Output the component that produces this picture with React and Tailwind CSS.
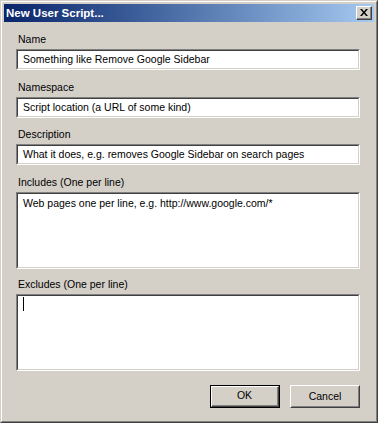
import React from "react";

function Sunken({ className = "", children }) {
  return (
    <div className={`border border-t-[#808080] border-l-[#808080] border-r-white border-b-white ${className}`}>
      <div className="h-full border border-t-[#404040] border-l-[#404040] border-r-[#d4d0c8] border-b-[#d4d0c8] bg-white">
        {children}
      </div>
    </div>
  );
}

function Field({ label, value, className }) {
  return (
    <div className={className}>
      <div className="pl-[14px] leading-[13px]">{label}</div>
      <Sunken className="mt-[3px] h-[21px] w-[344px] ml-3">
        <div className="pl-[5px] pt-[2px] leading-[13px] whitespace-nowrap">{value}</div>
      </Sunken>
    </div>
  );
}

function WinButton({ children, isDefault }) {
  if (isDefault) {
    return (
      <div className="w-[70px] h-[23px] border border-black">
        <div className="h-full border border-t-white border-l-white border-r-[#404040] border-b-[#404040]">
          <div className="h-full flex items-center justify-center border-r border-b border-[#808080]">
            {children}
          </div>
        </div>
      </div>
    );
  }
  return (
    <div className="w-[70px] h-[23px] border border-t-white border-l-white border-r-[#404040] border-b-[#404040]">
      <div className="h-full flex items-center justify-center border border-t-[#d4d0c8] border-l-[#d4d0c8] border-r-[#808080] border-b-[#808080]">
        {children}
      </div>
    </div>
  );
}

export default function App() {
  return (
    <div className="w-[378px] h-[423px] bg-[#d4d0c8] font-['Liberation_Sans',Arial,sans-serif] text-[10.5px] text-black">
      {/* window frame */}
      <div className="h-full border border-t-[#d4d0c8] border-l-[#d4d0c8] border-r-[#404040] border-b-[#404040]">
        <div className="h-full border border-t-white border-l-white border-r-[#808080] border-b-[#808080] p-[2px] flex flex-col">
          {/* title bar */}
          <div className="h-[18px] flex items-center justify-between bg-gradient-to-r from-[#0a246a] to-[#a6caf0] pl-[2px] pr-[2px]">
            <span className="text-white font-bold text-[11.5px] leading-[13px]">New User Script...</span>
            <div className="w-[16px] h-[14px] border border-t-white border-l-white border-r-[#404040] border-b-[#404040] bg-[#d4d0c8]">
              <div className="h-full flex items-center justify-center border-r border-b border-[#808080]">
                <svg width="8" height="7" viewBox="0 0 8 7">
                  <path d="M0 0h2l2 2.5L6 0h2L5 3.5 8 7H6L4 4.5 2 7H0l3-3.5z" fill="black" />
                </svg>
              </div>
            </div>
          </div>

          {/* body */}
          <div className="pt-[11px]">
            <Field label="Name" value="Something like Remove Google Sidebar" />
            <Field className="mt-[11px]" label="Namespace" value="Script location (a URL of some kind)" />
            <Field className="mt-[10px]" label="Description" value="What it does, e.g. removes Google Sidebar on search pages" />

            <div className="mt-[11px]">
              <div className="pl-[14px] leading-[13px]">Includes (One per line)</div>
              <Sunken className="mt-[3px] h-[77px] w-[344px] ml-3">
                <div className="pl-[5px] pt-[3px] leading-[13px]">Web pages one per line, e.g. http://www.google.com/*</div>
              </Sunken>
            </div>

            <div className="mt-[9px]">
              <div className="pl-[14px] leading-[13px]">Excludes (One per line)</div>
              <Sunken className="mt-[3px] h-[77px] w-[344px] ml-3">
                <div className="pl-[5px] pt-[1px]">
                  <div className="w-px h-[14px] bg-black" />
                </div>
              </Sunken>
            </div>

            <div className="mt-[14px] flex justify-end gap-[10px] w-[356px]">
              <WinButton isDefault>OK</WinButton>
              <WinButton>Cancel</WinButton>
            </div>
          </div>
        </div>
      </div>
    </div>
  );
}
